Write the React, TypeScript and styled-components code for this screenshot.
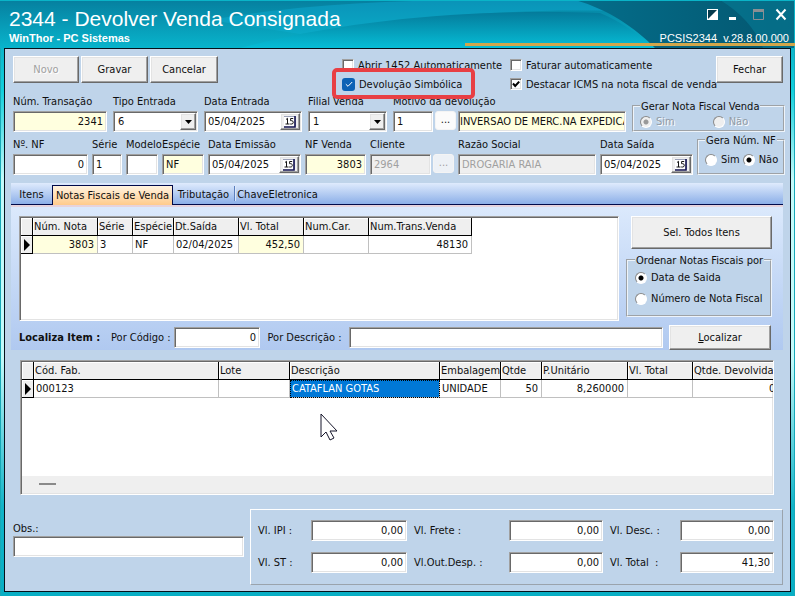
import React, { useId } from "react";
import styled, { createGlobalStyle, css } from "styled-components";

const FACE = "#efefef";
const PANEL = "#bfd4ea";

const GlobalStyle = createGlobalStyle`
  *, *::before, *::after { box-sizing: border-box; }
  body { margin: 0; }
  body, button, input, select {
    font-family: "DejaVu Sans Condensed", Tahoma, "DejaVu Sans", sans-serif;
    font-size: 11px;
    color: #101010;
  }
`;

const sunken = css`
  border: 1px solid;
  border-color: #a0a0a0 #fff #fff #a0a0a0;
  box-shadow: inset 1px 1px 0 #696969, inset -1px -1px 0 #e3e3e3;
`;

const raised = css`
  border: 1px solid;
  border-color: #fff #696969 #696969 #fff;
  box-shadow: inset -1px -1px 0 #a0a0a0, inset 1px 1px 0 #e3e3e3;
`;

const Window = styled.div`
  display: flex;
  flex-direction: column;
  min-height: 100vh;
  padding: 0 4px 4px;
  background: linear-gradient(180deg, #0796b5 0, #12cfdc 15%, #c4fafa 30%, #c4fafa 60%, #12b4c8 85%, #08aec4 100%);
  box-shadow: inset 1px 0 0 #17a8b8, inset -1px 0 0 #17a8b8;
`;

const TitleBar = styled.header`
  position: relative;
  display: flex;
  justify-content: space-between;
  height: 48px;
  margin: 0 -4px;
  padding: 7px 6px 0 9px;
  overflow: hidden;
  color: #fff;
  font-family: "Liberation Sans", Arial, sans-serif;
`;

const TitleArt = styled.svg`
  position: absolute;
  inset: 0;
  width: 100%;
  height: 100%;
`;

const TitleText = styled.div`
  position: relative;
`;

const Title = styled.h1`
  margin: 0;
  font-size: 21px;
  line-height: 24px;
  font-weight: 400;
`;

const Subtitle = styled.div`
  font-size: 11px;
  line-height: 14px;
  font-weight: 700;
`;

const TitleSide = styled.div`
  position: relative;
  display: flex;
  flex-direction: column;
  align-items: flex-end;
`;

const WindowButtons = styled.div`
  display: flex;
  gap: 8px;
  height: 24px;
`;

const WindowButton = styled.button`
  width: 15px;
  height: 15px;
  padding: 0;
  border: 0;
  background: none;
  color: #fff;
  svg { display: block; }
`;

const Version = styled.div`
  font-size: 11px;
  line-height: 14px;
  white-space: pre;
`;

const Body = styled.main`
  flex: 1;
  display: flex;
  flex-direction: column;
  border: 1px solid #06101a;
  background: ${PANEL};
`;

const Toolbar = styled.div`
  display: flex;
  align-items: flex-start;
  height: 46px;
  padding: 7px 7px 0 8px;
`;

const ButtonGroup = styled.div`
  display: flex;
  gap: 2px;
  margin-right: auto;
`;

const PushButton = styled.button<{ $w?: number; $h?: number }>`
  ${raised}
  flex: none;
  width: ${(p) => (p.$w ? p.$w + "px" : "67px")};
  height: ${(p) => p.$h ?? 27}px;
  padding: 0;
  background: ${FACE};
  &:disabled { color: #a0a0a0; text-shadow: 1px 1px 0 #fff; }
`;

const Checks = styled.div`
  display: grid;
  grid-template-columns: 168px 206px;
  grid-auto-rows: 16px;
  row-gap: 3px;
  padding-top: 1px;
`;

const CheckLabel = styled.label`
  position: relative;
  display: flex;
  align-items: center;
  gap: 4px;
  white-space: nowrap;
`;

const CheckBox = styled.input<{ $modern?: boolean }>`
  appearance: none;
  flex: none;
  width: 12px;
  height: 12px;
  margin: 0;
  ${sunken}
  background: #fff center / 10px 10px no-repeat;
  &:checked {
    background-image: url("data:image/svg+xml,%3Csvg xmlns='http://www.w3.org/2000/svg' viewBox='0 0 10 10'%3E%3Cpath d='M2 4.5L4.2 7L8.2 2.6' fill='none' stroke='%23000' stroke-width='2'/%3E%3C/svg%3E");
  }
  ${(p) =>
    p.$modern &&
    css`
      width: 13px;
      height: 13px;
      border: 0;
      border-radius: 3px;
      box-shadow: none;
      background-color: #0b62b5;
      &:checked {
        background-image: url("data:image/svg+xml,%3Csvg xmlns='http://www.w3.org/2000/svg' viewBox='0 0 10 10'%3E%3Cpath d='M1.8 5.2L4 7.3L8.2 3' fill='none' stroke='%23fff' stroke-width='1'/%3E%3C/svg%3E");
      }
    `}
`;

const Highlight = styled.span`
  position: absolute;
  top: -8px;
  bottom: -7px;
  left: -10px;
  right: 35px;
  border: 4px solid #e83f44;
  border-radius: 5px;
  pointer-events: none;
`;

const FieldRow = styled.div<{ $columns: string; $gap: number }>`
  display: grid;
  grid-template-columns: ${(p) => p.$columns};
  column-gap: ${(p) => p.$gap}px;
  align-items: end;
  padding: 0 5px 6px 8px;
`;

const FieldCell = styled.div`
  display: flex;
  flex-direction: column;
  gap: 2px;
  min-width: 0;
`;

const FieldLabel = styled.label`
  line-height: 14px;
  white-space: nowrap;
`;

const Inline = styled.div`
  display: flex;
  gap: 2px;
`;

type Tone = "plain" | "yellow" | "off";
const TONES: Record<Tone, string> = { plain: "#fff", yellow: "#ffffdf", off: FACE };

const TextInput = styled.input<{ $tone?: Tone; $right?: boolean; $w?: number; $pad?: number }>`
  ${sunken}
  width: ${(p) => (p.$w ? p.$w + "px" : "100%")};
  min-width: 0;
  flex: ${(p) => (p.$w ? "none" : "0 1 auto")};
  height: 21px;
  padding: 0 ${(p) => p.$pad ?? 3}px 0 ${(p) => p.$pad ?? 3}px;
  border-radius: 0;
  background: ${(p) => TONES[p.$tone ?? "plain"]};
  text-align: ${(p) => (p.$right ? "right" : "left")};
  outline: none;
  &:disabled { color: #a0a0a0; }
`;

const Composite = styled.div`
  ${sunken}
  display: flex;
  height: 21px;
  padding: 1px;
  background: #fff;
`;

const BareInput = styled.input`
  flex: 1;
  min-width: 0;
  padding: 0 0 0 2px;
  border: 0;
  background: none;
  outline: none;
`;

const CalendarButton = styled.button`
  ${raised}
  flex: none;
  width: 20px;
  padding: 0;
  background: ${FACE};
  svg { display: block; margin: auto; }
`;

const SelectBox = styled.div`
  position: relative;
`;

const Select = styled.select`
  ${sunken}
  appearance: none;
  display: block;
  width: 100%;
  height: 21px;
  padding: 0 18px 0 4px;
  border-radius: 0;
  background: #fff;
  outline: none;
`;

const SelectArrow = styled.span`
  ${raised}
  position: absolute;
  top: 2px;
  right: 2px;
  bottom: 2px;
  display: grid;
  place-items: center;
  width: 16px;
  background: ${FACE};
  pointer-events: none;
`;

const MoreButton = styled.button`
  flex: none;
  width: 21px;
  height: 19px;
  padding: 0 0 2px;
  border: 1px solid #f4f4f4;
  border-radius: 3px;
  background: #fbfbfb;
  line-height: 14px;
  &:disabled { background: #edf1f6; color: #a0a0a0; }
`;

const Group = styled.fieldset<{ $h: number; $gap: number }>`
  display: flex;
  align-items: center;
  gap: ${(p) => p.$gap}px;
  min-width: 0;
  height: ${(p) => p.$h}px;
  margin: -6px 0 0;
  padding: 0 6px;
  border: 2px groove #eef4fa;
  background: ${PANEL};
  &:disabled label { color: #929ba5; text-shadow: 1px 1px 0 #fff; }
`;

const Legend = styled.legend`
  padding: 3px 1px 0;
  line-height: 12px;
  white-space: nowrap;
`;

const RadioLabel = styled.label`
  display: flex;
  align-items: center;
  gap: 4px;
  line-height: 14px;
  white-space: nowrap;
`;

const Radio = styled.input`
  appearance: none;
  flex: none;
  width: 12px;
  height: 12px;
  margin: 0;
  border: 1px solid;
  border-color: #8a8a8a #fff #fff #8a8a8a;
  border-radius: 50%;
  background: #fff;
  &:checked { background: radial-gradient(circle, #000 0 2px, #fff 3px); }
  &:disabled { background: ${FACE}; }
  &:disabled:checked { background: radial-gradient(circle, #999 0 2px, ${FACE} 3px); }
`;

const TabsFrame = styled.section`
  margin: 2px 7px 0 6px;
`;

const TabStrip = styled.div`
  display: flex;
  align-items: flex-end;
  height: 22px;
  border-bottom: 1px solid #000a4a;
  background: linear-gradient(180deg, #dfebfd, #8cafe8);
`;

const Tab = styled.button<{ $active?: boolean; $w: number; $divider?: boolean }>`
  position: relative;
  width: ${(p) => p.$w}px;
  height: 19px;
  padding: 0;
  border: 0;
  background: none;
  white-space: nowrap;
  ${(p) =>
    p.$divider &&
    css`
      height: 15px;
      margin-bottom: 3px;
      padding-top: 2px;
      border-left: 1px solid #5c7fbd;
      box-shadow: inset 1px 0 0 #dce8fb;
    `}
  ${(p) =>
    p.$active &&
    css`
      height: 20px;
      margin-bottom: -1px;
      border: 1px solid #000a4a;
      border-bottom: 0;
      background: linear-gradient(180deg, #fff3e0, #ffcb8c);
    `}
`;

const TabPane = styled.div`
  display: flex;
  flex-direction: column;
  gap: 4px;
  border-top: 2px solid #e6d3dc;
  padding: 9px 8px 0;
  background: linear-gradient(180deg, #dbe9fc, #b0c9f0);
`;

const PaneTop = styled.div`
  display: flex;
  gap: 7px;
`;

const GridBox = styled.div<{ $grow?: boolean }>`
  ${sunken}
  display: flex;
  flex-direction: column;
  flex: 1;
  min-width: 0;
  min-height: 105px;
  padding: 1px;
  overflow: hidden;
  background: #fff;
  ${(p) =>
    p.$grow &&
    css`
      margin: 10px 16px 0 15px;
      min-height: 135px;
    `}
`;

const Table = styled.table<{ $w: number }>`
  width: ${(p) => p.$w}px;
  table-layout: fixed;
  border-collapse: separate;
  border-spacing: 0;
`;

const Col = styled.col<{ $w: number }>`
  width: ${(p) => p.$w}px;
`;

const HeadCell = styled.th`
  height: 18px;
  padding: 0 0 0 1px;
  border-right: 1px solid #000;
  border-bottom: 1px solid #000;
  background: ${FACE};
  box-shadow: inset 1px 1px 0 #fff;
  font-weight: 400;
  text-align: left;
  white-space: nowrap;
`;

const Cell = styled.td<{ $right?: boolean; $tone?: "yellow" | "selected" | "marker" }>`
  height: 18px;
  padding: 0 3px 0 2px;
  border-right: 1px solid #c0c0c0;
  border-bottom: 1px solid #c0c0c0;
  text-align: ${(p) => (p.$right ? "right" : "left")};
  white-space: nowrap;
  ${(p) => p.$tone === "yellow" && css`background: #ffffdf;`}
  ${(p) =>
    p.$tone === "selected" &&
    css`
      background: #0078d7;
      color: #fff;
      outline: 1px dotted #000;
      outline-offset: -1px;
    `}
  ${(p) =>
    p.$tone === "marker" &&
    css`
      padding: 0;
      border-color: #000;
      background: ${FACE};
      box-shadow: inset 1px 1px 0 #fff;
      svg { display: block; margin: auto; }
    `}
`;

const ScrollTrack = styled.div`
  height: 17px;
  margin-top: auto;
  padding: 7px 17px;
  background: ${FACE};
`;

const ScrollThumb = styled.div`
  width: 17px;
  height: 2px;
  background: #8a8a8a;
`;

const SideColumn = styled.div`
  display: flex;
  flex-direction: column;
  gap: 3px;
  width: 149px;
  padding-right: 3px;
`;

const SideButton = styled(PushButton)`
  width: auto;
  margin-left: 5px;
`;

const SideGroup = styled(Group)`
  flex-direction: column;
  align-items: flex-start;
  margin: 0;
  padding: 4px 7px 0;
`;

const SearchRow = styled.div`
  display: flex;
  align-items: center;
  gap: 6px;
  padding-right: 4px;
`;

const SearchTitle = styled.strong`
  flex: none;
  width: 86px;
  white-space: nowrap;
`;

const SearchLabel = styled.label<{ $w: number }>`
  flex: none;
  width: ${(p) => p.$w}px;
  text-align: center;
  white-space: nowrap;
`;

const Footer = styled.footer`
  display: grid;
  grid-template-columns: minmax(0, 231fr) minmax(0, 533fr);
  gap: 6px;
  padding: 14px 7px 6px 8px;
`;

const Notes = styled.div`
  display: flex;
  flex-direction: column;
  padding-top: 13px;
`;

const Totals = styled.div`
  display: grid;
  grid-template-columns: 60px minmax(0, 96fr) 102px minmax(0, 94fr) 77px minmax(0, 94fr);
  align-content: center;
  align-items: center;
  row-gap: 11px;
  height: 76px;
  padding: 0 8px 2px 0;
  border: 1px solid;
  border-color: #fff #9aa3ac #9aa3ac #fff;
`;

const TotalLabel = styled.label`
  padding-left: 7px;
  white-space: pre;
`;

const Pointer = styled.svg`
  position: absolute;
  left: 320px;
  top: 413px;
  pointer-events: none;
`;

function Field(props: {
  label: string; value: string; tone?: Tone; right?: boolean; disabled?: boolean;
}) {
  const id = useId();
  return (
    <FieldCell>
      <FieldLabel htmlFor={id}>{props.label}</FieldLabel>
      <TextInput id={id} defaultValue={props.value} $tone={props.tone} $right={props.right} disabled={props.disabled} />
    </FieldCell>
  );
}

function DateField({ label, value }: { label: string; value: string }) {
  const id = useId();
  return (
    <FieldCell>
      <FieldLabel htmlFor={id}>{label}</FieldLabel>
      <Composite>
        <BareInput id={id} defaultValue={value} />
        <CalendarButton type="button" aria-label={`Calendário: ${label}`}>
          <svg width="14" height="13" viewBox="0 0 14 13">
            <path d="M1 1h10v10H1z" fill="#fff" />
            <path d="M1 1.5h11.5v10" fill="none" stroke="#9aa0b8" />
            <path d="M12 1v11H1" fill="none" stroke="#141452" strokeWidth="1.6" />
            <path d="M3 4.5l1.5-1.2V9M2.5 9h4M10.2 3.5H7.6v2.2h1.2c2 0 2 3.3 0 3.3H7.2" fill="none" stroke="#151515" />
          </svg>
        </CalendarButton>
      </Composite>
    </FieldCell>
  );
}

function SelectField({ label, value }: { label: string; value: string }) {
  const id = useId();
  return (
    <FieldCell>
      <FieldLabel htmlFor={id}>{label}</FieldLabel>
      <SelectBox>
        <Select id={id} defaultValue={value}>
          <option>{value}</option>
        </Select>
        <SelectArrow aria-hidden="true">
          <svg width="7" height="4" viewBox="0 0 7 4"><path d="M0 0h7L3.5 4z" fill="#000" /></svg>
        </SelectArrow>
      </SelectBox>
    </FieldCell>
  );
}

function Choice({ name, label, checked }: { name: string; label: string; checked?: boolean }) {
  return (
    <RadioLabel>
      <Radio type="radio" name={name} defaultChecked={checked} />
      {label}
    </RadioLabel>
  );
}

function Total({ label, value }: { label: string; value: string }) {
  const id = useId();
  return (
    <>
      <TotalLabel htmlFor={id}>{label}</TotalLabel>
      <TextInput id={id} defaultValue={value} $right />
    </>
  );
}

type Column = { title: string; width: number; value: string; right?: boolean; tone?: "yellow" | "selected" };

const NOTES: Column[] = [
  { title: "Núm. Nota", width: 65, value: "3803", right: true, tone: "yellow" },
  { title: "Série", width: 35, value: "3" },
  { title: "Espécie", width: 41, value: "NF" },
  { title: "Dt.Saída", width: 65, value: "02/04/2025" },
  { title: "Vl. Total", width: 65, value: "452,50", right: true, tone: "yellow" },
  { title: "Num.Car.", width: 65, value: "" },
  { title: "Num.Trans.Venda", width: 103, value: "48130", right: true },
];

const ITEMS: Column[] = [
  { title: "Cód. Fab.", width: 185, value: "000123" },
  { title: "Lote", width: 71, value: "" },
  { title: "Descrição", width: 150, value: "CATAFLAN GOTAS", tone: "selected" },
  { title: "Embalagem", width: 61, value: "UNIDADE" },
  { title: "Qtde", width: 41, value: "50", right: true },
  { title: "P.Unitário", width: 86, value: "8,260000", right: true },
  { title: "Vl. Total", width: 65, value: "" },
  { title: "Qtde. Devolvida", width: 102, value: "0,00", right: true },
];

function DataGrid({ columns }: { columns: Column[] }) {
  return (
    <Table $w={columns.reduce((sum, c) => sum + c.width, 12)}>
      <colgroup>
        <Col $w={12} />
        {columns.map((c) => <Col key={c.title} $w={c.width} />)}
      </colgroup>
      <thead>
        <tr>
          <HeadCell />
          {columns.map((c) => <HeadCell key={c.title} scope="col">{c.title}</HeadCell>)}
        </tr>
      </thead>
      <tbody>
        <tr>
          <Cell $tone="marker">
            <svg width="7" height="12" viewBox="0 0 7 12"><path d="M1 0l6 6-6 6z" fill="#000" /></svg>
          </Cell>
          {columns.map((c) => (
            <Cell key={c.title} $right={c.right} $tone={c.tone}>{c.value}</Cell>
          ))}
        </tr>
      </tbody>
    </Table>
  );
}

export default function App() {
  return (
    <Window>
      <GlobalStyle />
      <TitleBar>
        <TitleArt viewBox="0 0 795 48" preserveAspectRatio="none" aria-hidden="true">
          <defs>
            <linearGradient id="base" x1="0" y1="0" x2="0" y2="1">
              <stop offset="0" stopColor="#067f9f" />
              <stop offset="1" stopColor="#08b4cc" />
            </linearGradient>
            <linearGradient id="wave" x1="0" y1="0" x2="0" y2="1">
              <stop offset="0" stopColor="#047b9b" />
              <stop offset="1" stopColor="#06bdd6" />
            </linearGradient>
            <linearGradient id="deep" x1="0" y1="0" x2="1" y2="0">
              <stop offset="0" stopColor="#046e8b" />
              <stop offset="1" stopColor="#04566f" />
            </linearGradient>
            <linearGradient id="light" x1="0" y1="0" x2="0" y2="1">
              <stop offset="0" stopColor="#0a93b8" />
              <stop offset="1" stopColor="#0aa9c6" />
            </linearGradient>
          </defs>
          <path d="M0 0h795v48H0z" fill="url(#base)" />
          <path d="M210 20C300 4 400 0 480 0h95c30 2 50 6 70 12C500 6 400 20 300 34z" fill="url(#light)" />
          <path d="M240 48C330 24 450 8 600 13c20 8 40 22 55 35z" fill="url(#wave)" />
          <path d="M575 0h220v48H655C635 28 610 10 575 0z" fill="url(#deep)" />
          <path d="M720 0c20 12 35 28 43 48h32V0z" fill="#067c96" opacity=".6" />
          <path d="M0 .5h795M794.5 0v48" stroke="#0ab4c8" fill="none" />
          <path d="M465 43h330v3H465z" fill="#d2a64a" />
        </TitleArt>
        <TitleText>
          <Title>2344 - Devolver Venda Consignada</Title>
          <Subtitle>WinThor - PC Sistemas</Subtitle>
        </TitleText>
        <TitleSide>
          <WindowButtons>
            <WindowButton type="button" aria-label="Contraste">
              <svg width="15" height="15" viewBox="0 0 15 15"><path d="M2 2h11v11H2z" fill="#fff" /><path d="M3 12V3h9z" fill="#063b4d" /></svg>
            </WindowButton>
            <WindowButton type="button" aria-label="Minimizar">
              <svg width="15" height="15" viewBox="0 0 15 15"><path d="M1 10h7v3H1z" fill="#fff" /></svg>
            </WindowButton>
            <WindowButton type="button" aria-label="Maximizar" disabled>
              <svg width="15" height="15" viewBox="0 0 15 15"><path d="M2.5 2v10.500h10V2" fill="none" stroke="#8a8f93" /><path d="M2 2h11v3H2z" fill="#8a8f93" /></svg>
            </WindowButton>
            <WindowButton type="button" aria-label="Fechar janela">
              <svg width="15" height="15" viewBox="0 0 15 15"><path d="M2.500 2.500l9 10M11.500 2.500l-9 10" stroke="#fff" strokeWidth="2" /></svg>
            </WindowButton>
          </WindowButtons>
          <Version>{"PCSIS2344  v.28.8.00.000"}</Version>
        </TitleSide>
      </TitleBar>

      <Body>
        <Toolbar>
          <ButtonGroup>
            <PushButton type="button" $w={66} disabled>Novo</PushButton>
            <PushButton type="button">Gravar</PushButton>
            <PushButton type="button" $w={68}>Cancelar</PushButton>
          </ButtonGroup>
          <Checks>
            <CheckLabel><CheckBox type="checkbox" />Abrir 1452 Automaticamente</CheckLabel>
            <CheckLabel><CheckBox type="checkbox" />Faturar automaticamente</CheckLabel>
            <CheckLabel>
              <CheckBox type="checkbox" $modern defaultChecked />Devolução Simbólica
              <Highlight />
            </CheckLabel>
            <CheckLabel><CheckBox type="checkbox" defaultChecked />Destacar ICMS na nota fiscal de venda</CheckLabel>
          </Checks>
          <PushButton type="button">Fechar</PushButton>
        </Toolbar>

        <FieldRow $gap={6} $columns="94fr 85fr 98fr 79fr 233fr 153px">
          <Field label="Núm. Transação" value="2341" tone="yellow" right />
          <SelectField label="Tipo Entrada" value="6" />
          <DateField label="Data Entrada" value="05/04/2025" />
          <SelectField label="Filial Venda" value="1" />
          <FieldCell>
            <FieldLabel htmlFor="reason">Motivo da devolução</FieldLabel>
            <Inline>
              <TextInput id="reason" defaultValue="1" $w={40} />
              <MoreButton type="button" aria-label="Procurar motivo">...</MoreButton>
              <TextInput aria-label="Descrição do motivo" defaultValue="INVERSAO DE MERC.NA EXPEDICAO" $tone="yellow" $pad={1} />
            </Inline>
          </FieldCell>
          <Group $h={34} $gap={38} disabled>
            <Legend>Gerar Nota Fiscal Venda</Legend>
            <Choice name="issue" label="Sim" checked />
            <Choice name="issue" label="Não" />
          </Group>
        </FieldRow>

        <FieldRow $gap={4} $columns="75fr 30fr 32fr 42fr 93fr 61fr 84px 138fr 93fr 88px">
          <Field label="Nº. NF" value="0" right />
          <Field label="Série" value="1" />
          <Field label="Modelo" value="" />
          <Field label="Espécie" value="NF" tone="yellow" />
          <DateField label="Data Emissão" value="05/04/2025" />
          <Field label="NF Venda" value="3803" tone="yellow" right />
          <FieldCell>
            <FieldLabel htmlFor="client">Cliente</FieldLabel>
            <Inline>
              <TextInput id="client" defaultValue="2964" $tone="off" $w={61} disabled />
              <MoreButton type="button" aria-label="Procurar cliente" disabled>...</MoreButton>
            </Inline>
          </FieldCell>
          <Field label="Razão Social" value="DROGARIA RAIA" tone="off" disabled />
          <DateField label="Data Saída" value="05/04/2025" />
          <Group $h={43} $gap={3}>
            <Legend>Gera Núm. NF</Legend>
            <Choice name="number" label="Sim" />
            <Choice name="number" label="Não" checked />
          </Group>
        </FieldRow>

        <TabsFrame>
          <TabStrip role="tablist">
            <Tab role="tab" $w={41}>Itens</Tab>
            <Tab role="tab" $w={121} $active aria-selected="true">Notas Fiscais de Venda</Tab>
            <Tab role="tab" $w={61}>Tributação</Tab>
            <Tab role="tab" $w={86} $divider>ChaveEletronica</Tab>
          </TabStrip>
          <TabPane role="tabpanel">
            <PaneTop>
              <GridBox><DataGrid columns={NOTES} /></GridBox>
              <SideColumn>
                <SideButton type="button" $h={33}>Sel. Todos Itens</SideButton>
                <SideGroup $h={65} $gap={7}>
                  <Legend>Ordenar Notas Fiscais por</Legend>
                  <Choice name="order" label="Data de Saida" checked />
                  <Choice name="order" label="Número de Nota Fiscal" />
                </SideGroup>
              </SideColumn>
            </PaneTop>
            <SearchRow>
              <SearchTitle>Localiza Item :</SearchTitle>
              <SearchLabel htmlFor="code" $w={57}>Por Código :</SearchLabel>
              <TextInput id="code" defaultValue="0" $right $w={86} />
              <SearchLabel htmlFor="text" $w={77}>Por Descrição :</SearchLabel>
              <TextInput id="text" />
              <PushButton type="button" $w={102} $h={25}><u>L</u>ocalizar</PushButton>
            </SearchRow>
          </TabPane>
        </TabsFrame>

        <GridBox $grow>
          <DataGrid columns={ITEMS} />
          <ScrollTrack><ScrollThumb /></ScrollTrack>
        </GridBox>

        <Footer>
          <Notes>
            <FieldLabel htmlFor="notes">Obs.:</FieldLabel>
            <TextInput id="notes" />
          </Notes>
          <Totals>
            <Total label="Vl. IPI :" value="0,00" />
            <Total label="Vl. Frete :" value="0,00" />
            <Total label="Vl. Desc. :" value="0,00" />
            <Total label="Vl. ST :" value="0,00" />
            <Total label="Vl.Out.Desp. :" value="0,00" />
            <Total label="Vl. Total  :" value="41,30" />
          </Totals>
        </Footer>
      </Body>

      <Pointer width="19" height="29" viewBox="0 0 19 29" aria-hidden="true">
        <path d="M1 1v23l5-5 4 8 4-2-4-7h7z" fill="#fff" stroke="#15152a" strokeWidth="1" />
      </Pointer>
    </Window>
  );
}
